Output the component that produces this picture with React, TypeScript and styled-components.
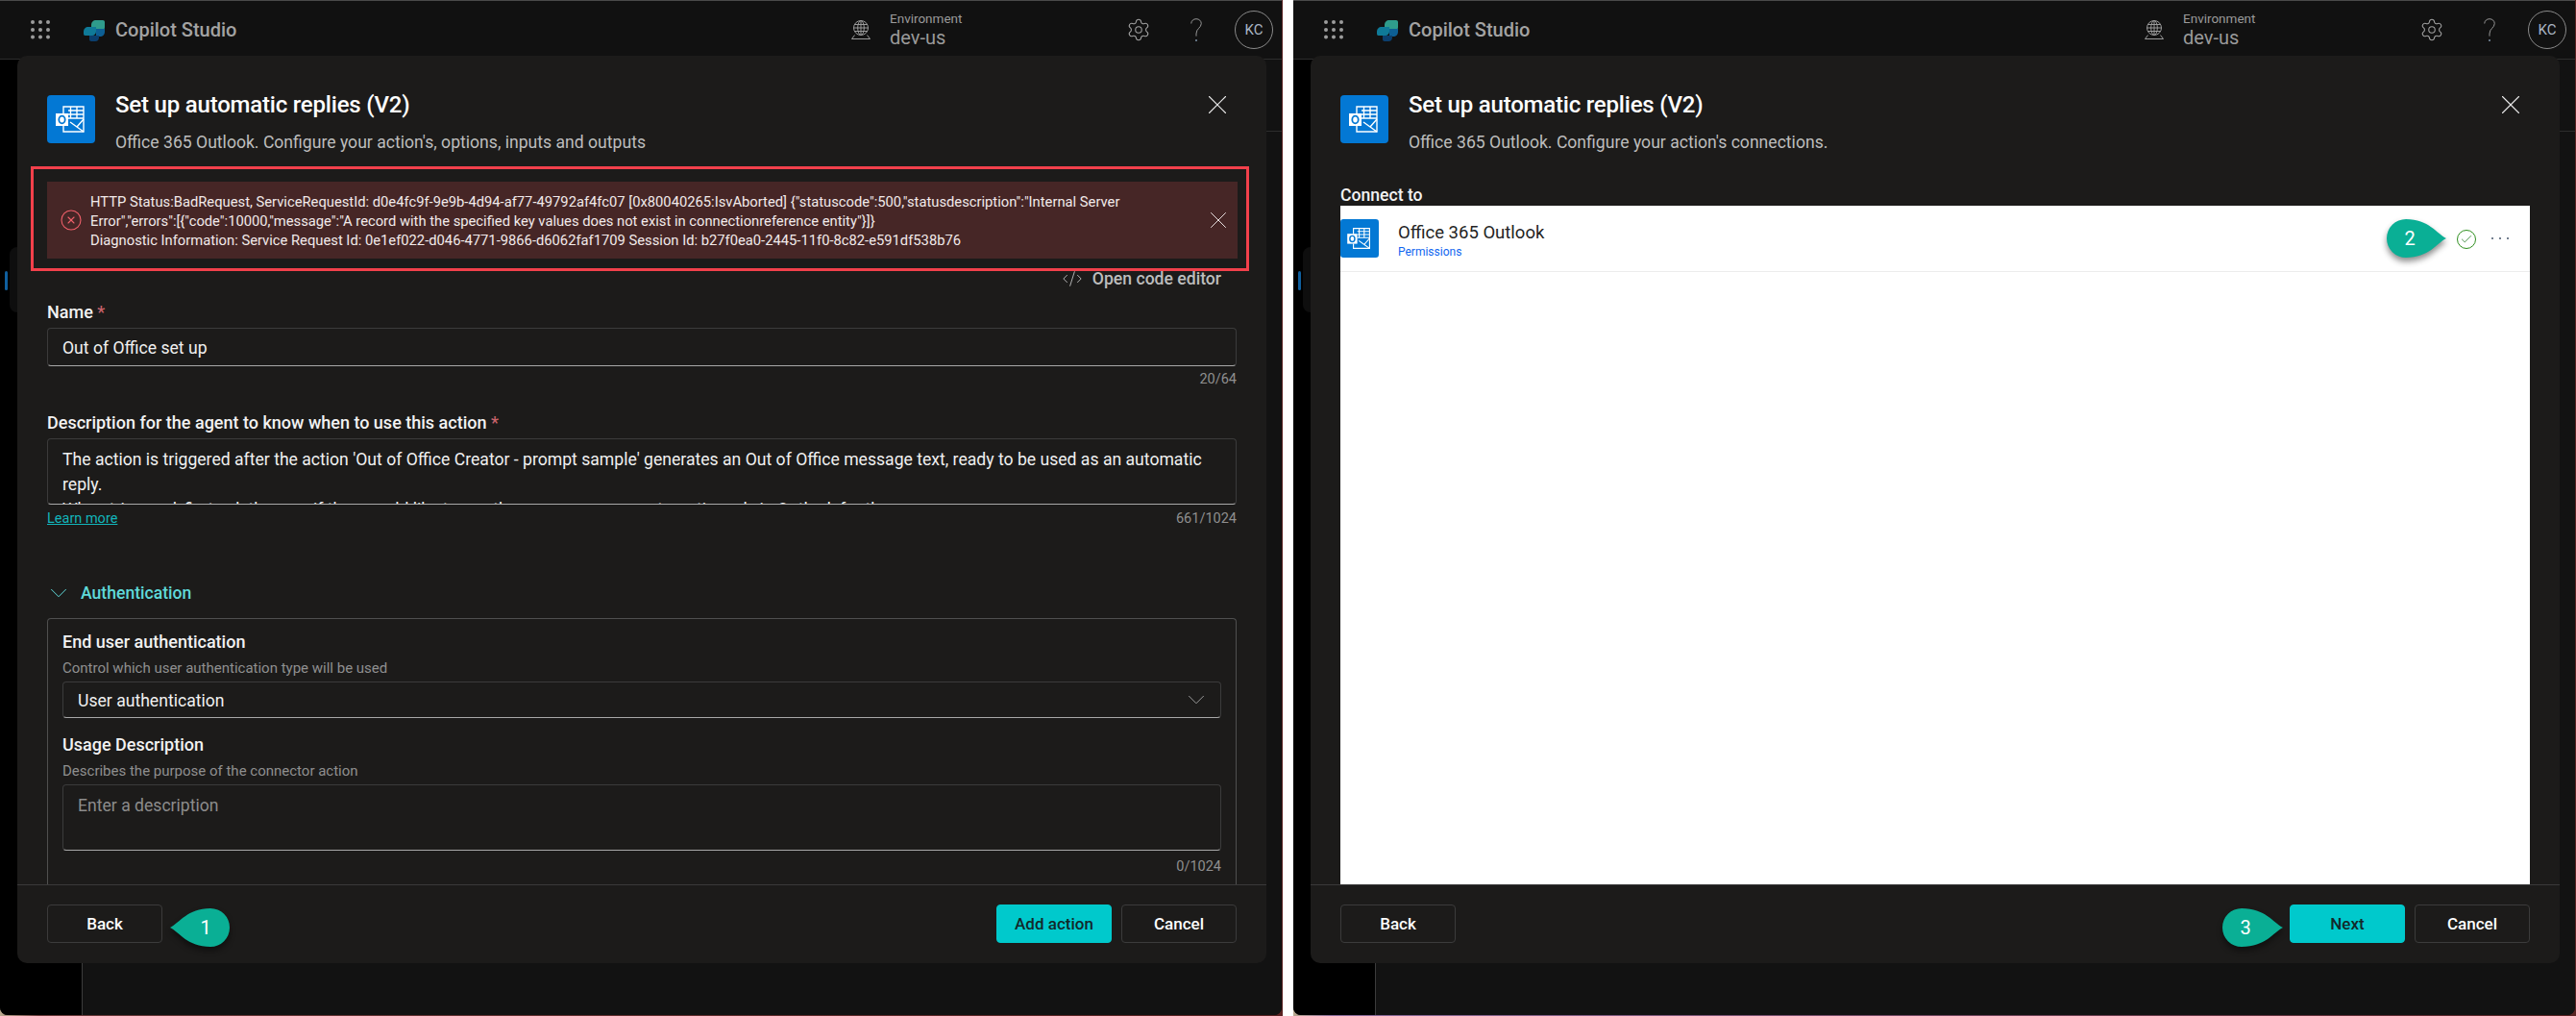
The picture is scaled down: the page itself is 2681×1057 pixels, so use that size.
import React from "react";
import styled, { createGlobalStyle } from "styled-components";
import { X, Settings, CircleX, CodeXml, ChevronDown, Check } from "lucide-react";

const Global = createGlobalStyle`
  html, body { margin: 0; padding: 0; background: #fff; }
  * { box-sizing: border-box; }
  body { font-family: Roboto, "Liberation Sans", sans-serif; -webkit-font-smoothing: auto; }
`;

const Page = styled.div`
  width: 2681px;
  height: 1057px;
  display: flex;
  justify-content: space-between;
  overflow: hidden;
  background: #fff;
`;

const Frame = styled.section<{ $edge: string }>`
  position: relative;
  width: 1335px;
  height: 1057px;
  background: ${(p) => p.$edge};
  flex: none;
`;

const Screen = styled.div`
  width: 1334px;
  height: 1056px;
  background: #111;
  border-top: 1px solid #4a4a4a;
  border-radius: 0 0 8px 8px;
  overflow: hidden;
  display: flex;
  flex-direction: column;
`;

const TopBar = styled.header`
  height: 60px;
  flex: none;
  display: flex;
  align-items: center;
  padding: 0 9px 0 32px;
  background: #111;
  color: #9e9e9e;
`;

const Waffle = styled.svg`
  width: 20px;
  height: 20px;
  flex: none;
  margin-top: -1px;
`;

const Logo = styled.svg`
  width: 24px;
  height: 23px;
  margin-left: 34px;
  flex: none;
`;

const Brand = styled.span`
  margin-left: 10px;
  font-size: 20px;
  font-weight: 500;
  color: #a3a3a3;
`;

const Grow = styled.div`
  flex: 1;
`;

const EnvIcon = styled.svg`
  width: 22px;
  height: 22px;
  flex: none;
`;

const EnvText = styled.div`
  margin: -3px 0 0 19px;
  width: 229px;
  display: flex;
  flex-direction: column;
`;

const EnvLabel = styled.span`
  font-size: 13.5px;
  line-height: 18px;
  color: #9a9a9a;
`;

const EnvValue = styled.span`
  font-size: 20px;
  line-height: 22px;
  color: #9a9a9a;
`;

const IconSlot = styled.div<{ $w: number }>`
  width: ${(p) => p.$w}px;
  display: flex;
  justify-content: center;
  color: #a0a0a0;
  flex: none;
`;

const Avatar = styled.div`
  width: 40px;
  height: 40px;
  margin-left: 10px;
  border-radius: 50%;
  border: 1px solid #8a8a8a;
  display: flex;
  align-items: center;
  justify-content: center;
  font-size: 15px;
  font-weight: 400;
  color: #a9b6c4;
  flex: none;
`;

const Workspace = styled.div`
  flex: 1;
  display: flex;
  min-height: 0;
  border-top: 1px solid #2e2e2e;
`;

const Sidebar = styled.aside`
  width: 86px;
  flex: none;
  background: #000;
  border-right: 1px solid #3c3c3c;
  display: flex;
  align-items: flex-start;
  padding: 195px 0 0 5px;
  gap: 2px;
`;

const NavMark = styled.div`
  width: 3px;
  height: 20px;
  margin-top: 25px;
  border-radius: 2px;
  background: #0f5f9e;
`;

const NavPill = styled.div`
  width: 60px;
  height: 68px;
  background: #0e0e0e;
  border-radius: 8px;
`;

const Main = styled.main`
  flex: 1;
  background: #121212;
`;

const MainBar = styled.div`
  height: 75px;
  border-bottom: 1px solid #2c2c2c;
`;

const Modal = styled.div`
  position: absolute;
  left: 18px;
  top: 58px;
  width: 1300px;
  height: 944px;
  background: #1c1b1a;
  border-radius: 10px;
  display: flex;
  flex-direction: column;
  overflow: hidden;
`;

const ModalHead = styled.div`
  display: flex;
  align-items: flex-start;
  padding: 41px 34px 0 31px;
  flex: none;
`;

const TileSvg = styled.svg<{ $size: number }>`
  width: ${(p) => p.$size}px;
  height: ${(p) => p.$size}px;
  flex: none;
  display: block;
`;

const HeadText = styled.div`
  flex: 1;
  margin-left: 21px;
`;

const Title = styled.h1`
  margin: 0;
  font-size: 24px;
  line-height: 20px;
  font-weight: 500;
  letter-spacing: -0.2px;
  color: #fff;
`;

const Subtitle = styled.p`
  margin: 18px 0 0;
  font-size: 17.6px;
  line-height: 22px;
  color: #bdbdbd;
`;

const CloseBtn = styled.div`
  color: #e8e8e8;
  display: flex;
  margin-top: -7px;
`;

const Body = styled.div`
  flex: 1;
  min-height: 0;
  display: flex;
  flex-direction: column;
  padding: 0 31px;
  overflow: hidden;
`;

const ErrorBar = styled.div`
  position: relative;
  flex: none;
  height: 80px;
  margin: 30px -1px 0 0;
  padding: 11px 0 0 45px;
  background: #462626;
  color: #f2eaea;
  font-size: 14.75px;
  line-height: 20px;
  display: flex;

  &::after {
    content: "";
    position: absolute;
    inset: -16px -12px -13px -17px;
    border: 3px solid #f2404b;
    pointer-events: none;
  }
`;

const ErrorIcon = styled.div`
  position: absolute;
  left: 13px;
  top: 28px;
  color: #f0606a;
  display: flex;
`;

const ErrorClose = styled.div`
  position: absolute;
  right: 5px;
  top: 25px;
  color: #e8e0e0;
  display: flex;
`;

const ErrorLines = styled.div`
  white-space: pre;
`;

const EditorLink = styled.div`
  flex: none;
  height: 20px;
  margin: 11px 16px 0 0;
  display: flex;
  justify-content: flex-end;
  align-items: center;
  gap: 10px;
  font-size: 17.6px;
  font-weight: 500;
  color: #bdbdbd;
`;

const FieldLabel = styled.label<{ $top: number }>`
  flex: none;
  display: block;
  margin-top: ${(p) => p.$top}px;
  font-size: 18px;
  line-height: 20px;
  font-weight: 500;
  color: #f2f2f2;
`;

const Star = styled.span`
  color: #c9636b;
`;

const Field = styled.div<{ $h: number; $top: number }>`
  flex: none;
  height: ${(p) => p.$h}px;
  margin-top: ${(p) => p.$top}px;
  border: 1px solid #3b3b3b;
  border-bottom-color: #a8a8a8;
  border-radius: 4px;
  padding: 2px 15px 0;
  display: flex;
  align-items: center;
  font-size: 17.6px;
  color: #f0f0f0;
  background: #1c1b1a;
`;

const TextArea = styled.div<{ $h: number; $top: number; $muted?: boolean }>`
  flex: none;
  height: ${(p) => p.$h}px;
  margin-top: ${(p) => p.$top}px;
  border: 1px solid #3b3b3b;
  border-bottom-color: #a8a8a8;
  border-radius: 4px;
  padding: 8px 15px 0;
  overflow: hidden;
  font-size: 17.6px;
  line-height: 26px;
  white-space: pre;
  color: ${(p) => (p.$muted ? "#8c8c8c" : "#f0f0f0")};
`;

const MetaRow = styled.div<{ $top: number }>`
  flex: none;
  height: 18px;
  margin-top: ${(p) => p.$top}px;
  display: flex;
  justify-content: space-between;
  align-items: center;
  font-size: 14.5px;
  color: #8f8f8f;
`;

const LearnLink = styled.a`
  color: #12b5bb;
  text-decoration: underline;
`;

const SectionHead = styled.div`
  flex: none;
  height: 22px;
  margin-top: 58px;
  display: flex;
  align-items: center;
  margin-left: -3px;
  gap: 8px;
  font-size: 17.6px;
  font-weight: 500;
  color: #5fd9d9;
`;

const AuthBox = styled.div`
  flex: 1 0 auto;
  margin-top: 15px;
  border: 1px solid #4f4f4f;
  border-bottom: none;
  border-radius: 4px 4px 0 0;
  padding: 14px 15px 0;
  display: flex;
  flex-direction: column;
`;

const Helper = styled.div`
  height: 18px;
  margin-top: 8px;
  font-size: 15px;
  line-height: 18px;
  color: #8f8f8f;
  flex: none;
`;

const SelectValue = styled.span`
  flex: 1;
`;

const SelectIcon = styled.div`
  color: #9a9a9a;
  display: flex;
  margin: -2px -5px 0 0;
`;

const Footer = styled.footer`
  flex: none;
  height: 82px;
  border-top: 1px solid #3a3a3a;
  padding: 20px 31px 0;
  display: flex;
  justify-content: space-between;
`;

const Actions = styled.div`
  display: flex;
  gap: 10px;
`;

const Button = styled.div<{ $primary?: boolean }>`
  width: 120px;
  height: 40px;
  border-radius: 4px;
  display: flex;
  align-items: center;
  justify-content: center;
  font-size: 17px;
  font-weight: 500;
  border: 1px solid ${(p) => (p.$primary ? "#00c9cc" : "#3b3b3b")};
  background: ${(p) => (p.$primary ? "#00c9cc" : "transparent")};
  color: ${(p) => (p.$primary ? "#12282a" : "#fff")};
`;

const Callout = styled.div<{ $x: number; $y: number; $w: number }>`
  position: absolute;
  left: ${(p) => p.$x}px;
  top: ${(p) => p.$y}px;
  width: ${(p) => p.$w}px;
  height: 40px;
`;

const CalloutShape = styled.svg`
  position: absolute;
  inset: 0;
  width: 100%;
  height: 100%;
  overflow: visible;
  filter: drop-shadow(0 4px 3px rgba(0, 0, 0, 0.45));
`;

const CalloutNum = styled.span<{ $cx: number }>`
  position: absolute;
  left: ${(p) => p.$cx - 15}px;
  top: 0;
  width: 30px;
  text-align: center;
  line-height: 40px;
  font-size: 20px;
  color: #fff;
`;

const ConnectLabel = styled.div`
  flex: none;
  height: 20px;
  margin-top: 34px;
  font-size: 17.6px;
  line-height: 20px;
  font-weight: 500;
  color: #f2f2f2;
`;

const WhitePanel = styled.div`
  flex: 1;
  margin-top: 1px;
  background: #fff;
`;

const ConnRow = styled.div`
  height: 69px;
  border-bottom: 1px solid #ececec;
  padding: 14px 21px 0 0;
  display: flex;
  align-items: flex-start;
`;

const ConnText = styled.div`
  margin-left: 20px;
  flex: 1;
  display: flex;
  flex-direction: column;
`;

const ConnName = styled.span`
  font-size: 18.5px;
  line-height: 20px;
  font-weight: 400;
  color: #242424;
  margin-top: 4px;
`;

const ConnLink = styled.span`
  font-size: 12px;
  line-height: 18px;
  margin-top: 1px;
  color: #1066f0;
`;

const ConnStatus = styled.div`
  width: 20px;
  height: 20px;
  margin-top: 11px;
  border: 1px solid #2f8f1f;
  border-radius: 50%;
  color: #0b6a0b;
  display: flex;
  align-items: center;
  justify-content: center;
`;

const Dots = styled.svg`
  width: 20px;
  height: 6px;
  margin: 17px 0 0 15px;
  flex: none;
`;

const OutlookTile = ({ size }: { size: number }) => (
  <TileSvg $size={size} viewBox="0 0 50 50">
    <rect width="50" height="50" rx="4" fill="#0378d4" />
    <g fill="none" stroke="#fff" strokeWidth="1.4">
      <path d="M17 19V12h21v26H17v-6" />
      <path d="M24.500 12v12M31 12v12M22 16h16M22 20h16M22 24h16" />
      <path d="M24 28L38 38M38 25L31 33" />
    </g>
    <rect x="9" y="19" width="13" height="13" fill="#fff" />
    <ellipse cx="15.5" cy="25.5" rx="3.2" ry="3.8" fill="none" stroke="#0378d4" strokeWidth="1.8" />
  </TileSvg>
);

const CopilotLogo = () => (
  <Logo viewBox="0 0 24 23">
    <path d="M9 6c0-3 2-5 5-5h7c1.2 0 2 .8 2 2v5c0 3-2 4-5 4h-9z" fill="#2f9c8c" />
    <path d="M1 13c0-3 2-5 5-5h8v5c0 2-2 4-4 4H2.500C1.500 17 1 16 1 15z" fill="#0f7a98" />
    <path d="M14 10h9v3c0 3-2 5-5 5h-4z" fill="#0d5f94" />
    <path d="M7 17h10v2c0 2.500-1.500 4-4 4H9c-1.200 0-2-.8-2-2z" fill="#0b3f6e" />
  </Logo>
);

const TopStrip = () => (
  <TopBar>
    <Waffle viewBox="0 0 20 20" fill="#9c9c9c">
      {[2, 10, 18].map((x) =>
        [2, 10, 17.5].map((y) => <circle key={`${x}-${y}`} cx={x} cy={y} r="2" />)
      )}
    </Waffle>
    <CopilotLogo />
    <Brand>Copilot Studio</Brand>
    <Grow />
    <EnvIcon viewBox="0 0 22 22" fill="none" stroke="#9a9a9a" strokeWidth="1">
      <circle cx="11" cy="9" r="7.5" />
      <ellipse cx="11" cy="9" rx="3.3" ry="7.5" />
      <path d="M3.500 9h15M4.500 5.500h13M4.500 12.500h13M11 1.500v15" />
      <path d="M4.500 16.500L1.500 20.500h19l-3-4" />
    </EnvIcon>
    <EnvText>
      <EnvLabel>Environment</EnvLabel>
      <EnvValue>dev-us</EnvValue>
    </EnvText>
    <IconSlot $w={60}>
      <Settings size={26} strokeWidth={1} />
    </IconSlot>
    <IconSlot $w={60}>
      <svg width="14" height="29" viewBox="0 0 16 30" fill="none" stroke="#9a9a9a" strokeWidth="1.1">
        <path d="M2 7c0-3 2.500-5.500 6-5.500s6 2.500 6 5.500c0 5-6 6-6 12v3" />
        <circle cx="8" cy="27" r="0.7" fill="#7f93a8" stroke="#7f93a8" />
      </svg>
    </IconSlot>
    <Avatar>KC</Avatar>
  </TopBar>
);

const Shell = ({ edge, children }: { edge: string; children: React.ReactNode }) => (
  <Frame $edge={edge}>
    <Screen>
      <TopStrip />
      <Workspace>
        <Sidebar>
          <NavMark />
          <NavPill />
        </Sidebar>
        <Main>
          <MainBar />
        </Main>
      </Workspace>
    </Screen>
    <Modal>{children}</Modal>
  </Frame>
);

const Head = ({ subtitle }: { subtitle: string }) => (
  <ModalHead>
    <OutlookTile size={50} />
    <HeadText>
      <Title>Set up automatic replies (V2)</Title>
      <Subtitle>{subtitle}</Subtitle>
    </HeadText>
    <CloseBtn>
      <X size={34} strokeWidth={0.75} />
    </CloseBtn>
  </ModalHead>
);

const Pin = ({ x, y, w, num, dir }: { x: number; y: number; w: number; num: string; dir: "left" | "right" }) => (
  <Callout $x={x} $y={y} $w={w}>
    <CalloutShape viewBox={`0 0 ${w} 40`}>
      {dir === "left" ? (
        <path
          d={`M0 20C10 15 18 0 ${w - 20} 0a20 20 0 0 1 0 40C18 40 10 25 0 20Z`}
          fill="#0aaf95"
        />
      ) : (
        <path
          d={`M${w} 20C${w - 10} 15 ${w - 18} 0 20 0a20 20 0 0 0 0 40C${w - 18} 40 ${w - 10} 25 ${w} 20Z`}
          fill="#0aaf95"
        />
      )}
    </CalloutShape>
    <CalloutNum $cx={dir === "left" ? w - 25 : 24}>{num}</CalloutNum>
  </Callout>
);

export default function App() {
  return (
    <Page>
      <Global />
      <Shell edge="linear-gradient(90deg,#b9a98f 0%,#6b3a3a 3%,#5a2222 100%)">
        <Head subtitle="Office 365 Outlook. Configure your action's, options, inputs and outputs" />
        <Body>
          <ErrorBar>
            <ErrorIcon>
              <CircleX size={24} strokeWidth={1.1} />
            </ErrorIcon>
            <ErrorLines>
              {`HTTP Status:BadRequest, ServiceRequestId: d0e4fc9f-9e9b-4d94-af77-49792af4fc07 [0x80040265:IsvAborted] {"statuscode":500,"statusdescription":"Internal Server\nError","errors":[{"code":10000,"message":"A record with the specified key values does not exist in connectionreference entity"}]}\nDiagnostic Information: Service Request Id: 0e1ef022-d046-4771-9866-d6062faf1709 Session Id: b27f0ea0-2445-11f0-8c82-e591df538b76`}
            </ErrorLines>
            <ErrorClose>
              <X size={30} strokeWidth={0.8} />
            </ErrorClose>
          </ErrorBar>
          <EditorLink>
            <CodeXml size={22} strokeWidth={1} />
            Open code editor
          </EditorLink>
          <FieldLabel $top={15}>
            Name <Star>*</Star>
          </FieldLabel>
          <Field $h={40} $top={6}>
            Out of Office set up
          </Field>
          <MetaRow $top={4}>
            <span />
            <span>20/64</span>
          </MetaRow>
          <FieldLabel $top={27}>
            Description for the agent to know when to use this action <Star>*</Star>
          </FieldLabel>
          <TextArea $h={69} $top={6}>
            {`The action is triggered after the action 'Out of Office Creator - prompt sample' generates an Out of Office message text, ready to be used as an automatic\nreply.\nWhen triggered, first ask the user if they would like to use the message as an automatic reply in Outlook for them.`}
          </TextArea>
          <MetaRow $top={5}>
            <LearnLink>Learn more</LearnLink>
            <span>661/1024</span>
          </MetaRow>
          <SectionHead>
            <ChevronDown size={30} strokeWidth={0.8} />
            Authentication
          </SectionHead>
          <AuthBox>
            <FieldLabel $top={0}>End user authentication</FieldLabel>
            <Helper>Control which user authentication type will be used</Helper>
            <Field $h={38} $top={5}>
              <SelectValue>User authentication</SelectValue>
              <SelectIcon>
                <ChevronDown size={30} strokeWidth={0.8} />
              </SelectIcon>
            </Field>
            <FieldLabel $top={18}>Usage Description</FieldLabel>
            <Helper>Describes the purpose of the connector action</Helper>
            <TextArea $h={69} $top={5} $muted>
              Enter a description
            </TextArea>
            <MetaRow $top={7}>
              <span />
              <span>0/1024</span>
            </MetaRow>
          </AuthBox>
        </Body>
        <Footer>
          <Button>Back</Button>
          <Actions>
            <Button $primary>Add action</Button>
            <Button>Cancel</Button>
          </Actions>
        </Footer>
        <Pin x={159} y={887} w={62} num="1" dir="left" />
      </Shell>

      <Shell edge="linear-gradient(90deg,#b9a98f 0%,#8a6a9a 3%,#5a2222 100%)">
        <Head subtitle="Office 365 Outlook. Configure your action's connections." />
        <Body>
          <ConnectLabel>Connect to</ConnectLabel>
          <WhitePanel>
            <ConnRow>
              <OutlookTile size={40} />
              <ConnText>
                <ConnName>Office 365 Outlook</ConnName>
                <ConnLink>Permissions</ConnLink>
              </ConnText>
              <ConnStatus>
                <Check size={14} strokeWidth={1.2} />
              </ConnStatus>
              <Dots viewBox="0 0 20 6" fill="#44556a">
                <circle cx="2" cy="3" r="1" />
                <circle cx="10" cy="3" r="1" />
                <circle cx="18" cy="3" r="1" />
              </Dots>
            </ConnRow>
          </WhitePanel>
        </Body>
        <Footer>
          <Button>Back</Button>
          <Actions>
            <Button $primary>Next</Button>
            <Button>Cancel</Button>
          </Actions>
        </Footer>
        <Pin x={1120} y={170} w={62} num="2" dir="right" />
        <Pin x={949} y={887} w={63} num="3" dir="right" />
      </Shell>
    </Page>
  );
}
